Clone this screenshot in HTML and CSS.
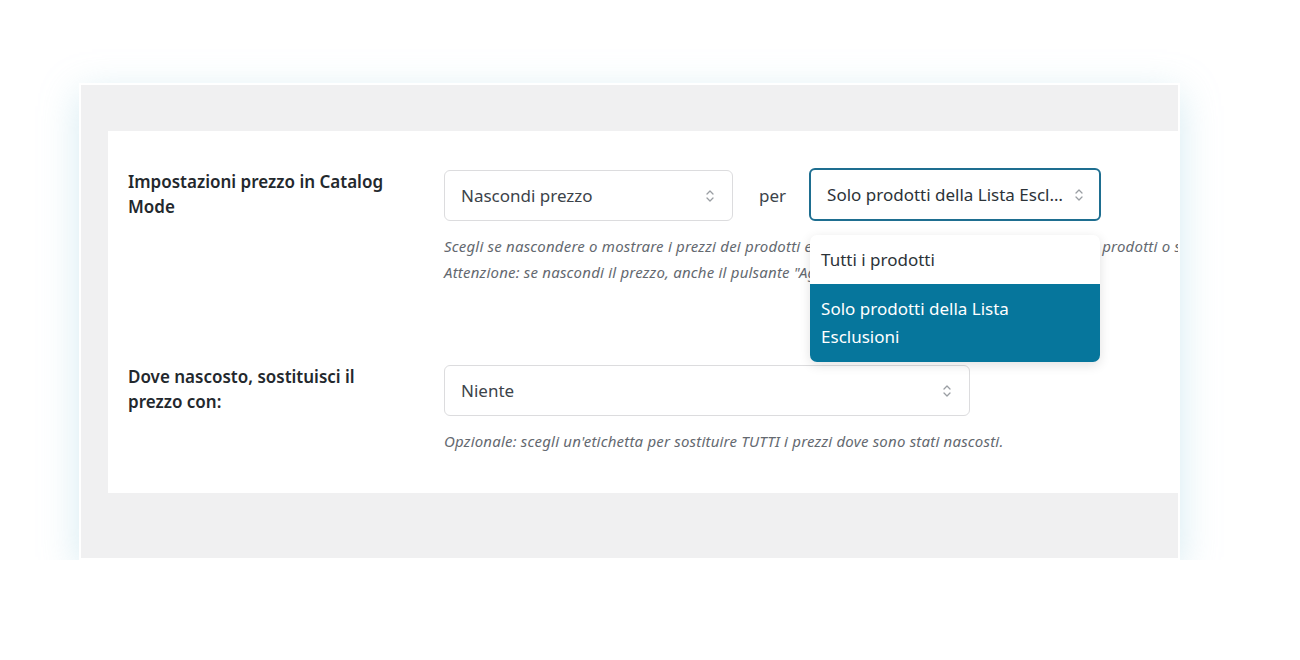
FILE: index.html
```html
<!DOCTYPE html>
<html lang="it">

<head>
    <meta charset="UTF-8">
    <meta name="viewport" content="width=device-width, initial-scale=1.0">
    <title>Catalog Mode</title>
    <link rel="stylesheet" href="styles.css">
</head>

<body>
    <div class="frame">
        <div class="card">
            <!-- Price setting -->
            <div class="row">
                <div class="row-label">Impostazioni prezzo in Catalog Mode</div>
                <div class="row-field">
                    <div class="field-line">
                        <div class="select select-price">
                            <span class="select-text">Nascondi prezzo</span>
                            <svg class="chevrons" viewBox="0 0 10 16" width="10" height="16"><path d="M2 6l3-3 3 3M2 10l3 3 3-3" fill="none" stroke="#9a9ea3" stroke-width="1.3" stroke-linecap="round" stroke-linejoin="round"/></svg>
                        </div>
                        <span class="per">per</span>
                        <div class="select-wrap">
                            <div class="select select-scope is-open">
                                <span class="select-text">Solo prodotti della Lista Esclusioni</span>
                                <svg class="chevrons" viewBox="0 0 10 16" width="10" height="16"><path d="M2 6l3-3 3 3M2 10l3 3 3-3" fill="none" stroke="#9a9ea3" stroke-width="1.3" stroke-linecap="round" stroke-linejoin="round"/></svg>
                            </div>
                            <ul class="dropdown">
                                <li class="option">Tutti i prodotti</li>
                                <li class="option selected">Solo prodotti della Lista Esclusioni</li>
                            </ul>
                        </div>
                    </div>
                    <p class="description">Scegli se nascondere o mostrare i prezzi dei prodotti e se applicare questa impostazione a tutti i prodotti o solo a quelli della Lista Esclusioni.<br>Attenzione: se nascondi il prezzo, anche il pulsante "Aggiungi al carrello" verrà nascosto.</p>
                </div>
            </div>

            <!-- Replacement label -->
            <div class="row row-second">
                <div class="row-label">Dove nascosto, sostituisci il prezzo con:</div>
                <div class="row-field">
                    <div class="select select-wide">
                        <span class="select-text">Niente</span>
                        <svg class="chevrons" viewBox="0 0 10 16" width="10" height="16"><path d="M2 6l3-3 3 3M2 10l3 3 3-3" fill="none" stroke="#9a9ea3" stroke-width="1.3" stroke-linecap="round" stroke-linejoin="round"/></svg>
                    </div>
                    <p class="description">Opzionale: scegli un'etichetta per sostituire TUTTI i prezzi dove sono stati nascosti.</p>
                </div>
            </div>
        </div>
    </div>
</body>

</html>
```

FILE: styles.css
```css
body {
    margin: 0;
    background-color: #fff;
    font-family: "Noto Sans", "Open Sans", sans-serif;
    color: #1d2327;
    padding: 83px 0 0 79px;
}

.frame {
    width: 1070px;
    height: 427px;
    border: 2px solid #fff;
    background-color: #f0f0f1;
    box-shadow: 0 10px 36px rgba(150, 205, 222, 0.4);
    padding: 46px 0 0 27px;
    overflow: hidden;
}

.card {
    background-color: #fff;
    height: 362px;
    box-sizing: border-box;
    padding: 39px 0 0 20px;
}

.row {
    display: flex;
}

.row-second {
    margin-top: 80px;
}

.row-label {
    width: 316px;
    flex-shrink: 0;
    font-size: 17px;
    font-weight: 600;
    line-height: 25px;
    padding-right: 46px;
    box-sizing: border-box;
    margin-top: -1px;
    color: #23282d;
}

.row-field {
    flex: 1;
    min-width: 0;
}

.field-line {
    display: flex;
    align-items: center;
}

.select {
    display: flex;
    align-items: center;
    height: 51px;
    box-sizing: border-box;
    border: 1px solid #dcdcde;
    border-radius: 6px;
    padding: 0 17px 0 16px;
    font-size: 17px;
    color: #3c434a;
    background-color: #fff;
}

.select-text {
    flex: 1;
    min-width: 0;
    white-space: nowrap;
    overflow: hidden;
    text-overflow: ellipsis;
}

.chevrons {
    flex-shrink: 0;
    margin-left: 6px;
}

.select-price {
    width: 289px;
}

.per {
    font-size: 17px;
    color: #3c434a;
    margin: 0 23px 0 26px;
}

.select-wrap {
    position: relative;
}

.select-scope {
    width: 292px;
    height: 53px;
    margin-top: -2px;
    border: 2px solid #1e6e90;
    padding: 0 15px 0 16px;
    color: #2c3338;
}

.select-wide {
    width: 526px;
}

.dropdown {
    position: absolute;
    top: 65px;
    left: 1px;
    width: 290px;
    margin: 0;
    padding: 0;
    list-style: none;
    background-color: #fff;
    border-radius: 7px;
    box-shadow: 0 3px 12px rgba(0, 0, 0, 0.12);
    overflow: hidden;
    font-size: 17px;
}

.option {
    padding: 12px 11px;
    line-height: 25px;
    color: #2c3338;
}

.option.selected {
    background-color: #06769c;
    color: #fff;
    padding: 11px 60px 11px 11px;
    line-height: 28px;
}

.description {
    margin: 12px 0 0;
    font-size: 15px;
    letter-spacing: 0.2px;
    font-style: italic;
    line-height: 26px;
    color: #646970;
    white-space: nowrap;
}
```
